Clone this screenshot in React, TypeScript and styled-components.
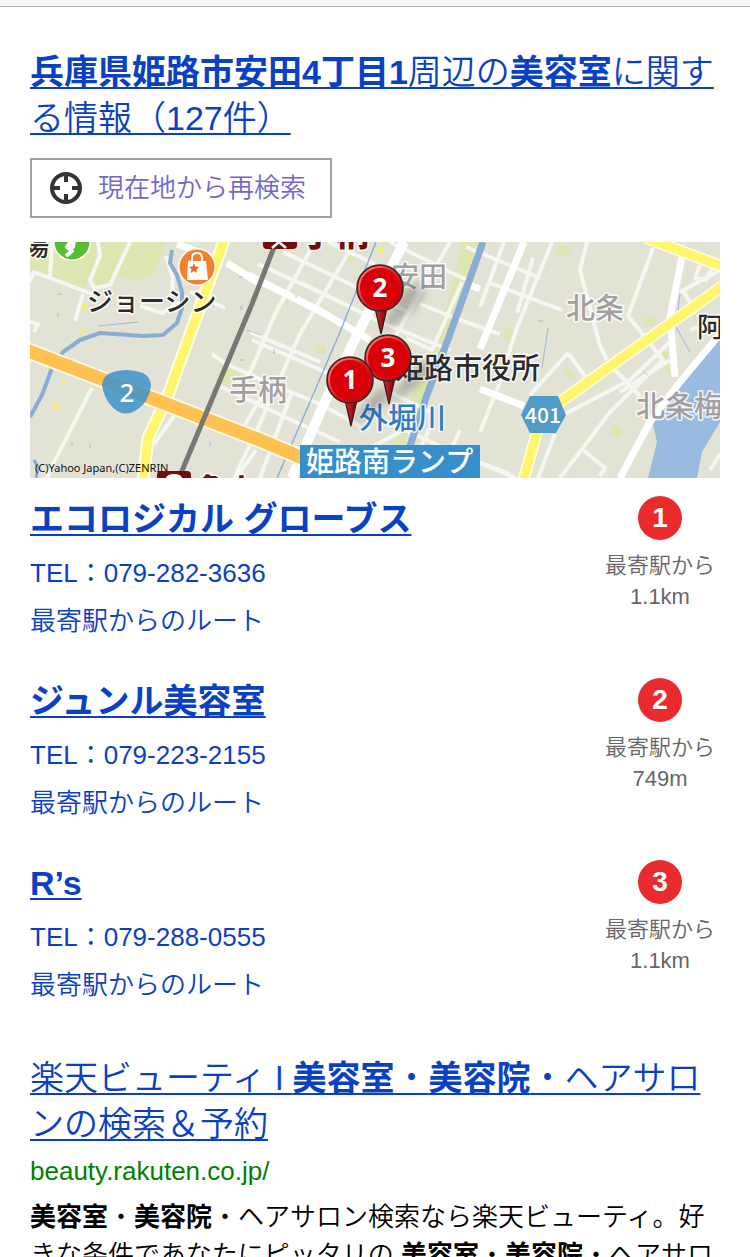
import React from "react";
import styled, { createGlobalStyle } from "styled-components";

const jp = `"Liberation Sans", "Noto Sans CJK JP", sans-serif`;

const GlobalStyle = createGlobalStyle`
  *, *::before, *::after { box-sizing: border-box; }
  body {
    margin: 0;
    background: #fff;
    color: #000;
    font-family: ${jp};
    font-weight: 350;
  }
`;

const BrowserEdge = styled.div`
  height: 7px;
  background: #f4f5f9;
  border-bottom: 1px solid #b2b2b2;
`;

const Page = styled.main`
  padding: 42px 30px 0;
`;

const Heading = styled.h2`
  margin: 0;
  font-size: 34px;
  line-height: 46px;
  font-weight: 350;
`;

const TitleLink = styled.a`
  color: #0a41c4;
  text-decoration: underline;
  text-decoration-thickness: 2px;
  text-underline-offset: 3px;

  b { font-weight: 700; }
`;

const LocateButton = styled.button`
  display: flex;
  align-items: center;
  gap: 16px;
  height: 60px;
  margin: 17px 0 24px;
  padding: 0 24px 0 18px;
  border: 2px solid #a0a0a0;
  border-radius: 0;
  background: #fff;
  color: #6f68cb;
  font-family: ${jp};
  font-weight: 350;
  font-size: 26px;
  line-height: 38px;
`;

const MapLink = styled.a`
  display: block;
  overflow: hidden;

  svg { display: block; width: 100%; height: auto; }
`;

const ShopList = styled.ul`
  margin: 0;
  padding: 0;
  list-style: none;
`;

const Shop = styled.li`
  display: flex;
  justify-content: space-between;
  align-items: flex-start;
  height: 182px;
  padding-top: 18px;
`;

const ShopName = styled.h3`
  margin: 0 0 7px;
  font-size: 34px;
  line-height: 46px;
  font-weight: 700;
`;

const ShopInfo = styled.div`
  flex: 1;
  min-width: 0;
`;

const ShopLink = styled.a`
  display: block;
  width: fit-content;
  color: #0a41c4;
  font-size: 26px;
  line-height: 48px;
  text-decoration: none;
`;

const Distance = styled.div`
  display: flex;
  flex-direction: column;
  align-items: center;
  width: 120px;
  color: #666;
  font-size: 22px;
  line-height: 31px;
`;

const Badge = styled.span`
  width: 44px;
  height: 44px;
  margin-bottom: 10px;
  border-radius: 50%;
  background: #e92b2d;
  color: #fff;
  font-size: 28px;
  line-height: 44px;
  font-weight: 700;
  text-align: center;
`;

const Result = styled.section`
  padding-top: 31px;
`;

const Url = styled.cite`
  display: block;
  margin: 5px 0 8px;
  color: #008000;
  font-size: 26px;
  line-height: 38px;
  font-style: normal;
`;

const Snippet = styled.p`
  margin: 0;
  font-size: 26px;
  line-height: 38px;

  b { font-weight: 700; }
`;

const MapText = styled.text<{ $size?: number; $tone?: string; $weight?: number; $halo?: number }>`
  font-family: "Noto Sans CJK JP", sans-serif;
  font-size: ${(p) => p.$size ?? 29}px;
  font-weight: ${(p) => p.$weight ?? 500};
  fill: ${(p) => p.$tone ?? "#2b2b2b"};
  stroke: #fff;
  stroke-opacity: 0.85;
  stroke-width: ${(p) => p.$halo ?? 3}px;
  stroke-linejoin: round;
  paint-order: stroke;
`;

const SignText = styled.text<{ $size: number; $weight?: number; $tone?: string }>`
  font-family: "Noto Sans", "Open Sans", sans-serif;
  font-size: ${(p) => p.$size}px;
  font-weight: ${(p) => p.$weight ?? 500};
  fill: ${(p) => p.$tone ?? "#fff"};
`;

const RouteNumber = styled.text`
  font-family: "Noto Sans CJK JP", sans-serif;
  font-size: 21px;
  font-weight: 500;
  fill: #fff;
`;

const Crosshair = () => (
  <svg width="32" height="32" viewBox="0 0 32 32" fill="none" stroke="#333" strokeWidth="4" aria-hidden="true">
    <circle cx="16" cy="16" r="14" />
    <path d="M16 2v8M16 22v8M2 16h8M22 16h8" />
  </svg>
);

const Pin = ({ x, y, n }: { x: number; y: number; n: number }) => (
  <g transform={`translate(${x} ${y})`}>
    <path d="M-5 20L1 46L7 20Z" fill="url(#pinPoint)" stroke="#2e2020" strokeWidth="1.2" />
    <circle r="23" fill="#d90007" stroke="#3a2626" strokeWidth="1.6" />
    <circle r="21" fill="none" stroke="url(#pinShine)" strokeWidth="2" />
    <SignText x="0" y="9" $size={26} $weight={700} textAnchor="middle">{n}</SignText>
  </g>
);

const AreaMap = () => (
  <svg viewBox="0 0 690 236" role="img" aria-label="周辺地図">
    <defs>
      <linearGradient id="pinShine" x1="0" y1="0" x2="1" y2="1">
        <stop offset="0" stopColor="#ff8d8d" />
        <stop offset=".55" stopColor="#dc1a1c" />
        <stop offset="1" stopColor="#a60008" />
      </linearGradient>
      <linearGradient id="pinPoint">
        <stop offset="0" stopColor="#e22828" />
        <stop offset="1" stopColor="#7a0008" />
      </linearGradient>
      <filter id="soft" x="-30%" y="-30%" width="160%" height="160%"><feGaussianBlur stdDeviation="4" /></filter>
    </defs>
    <rect width="690" height="236" fill="#e3e3d5" />

    <g fill="#dde6b0">
      <path d="M0 0H68L65 20L55 46L20 34L0 28Z" />
      <path d="M70 0H135L126 28Q110 46 92 34L70 46L60 40L70 14Z" />
      <path d="M196 122L216 130L200 146L190 140Z" />
      <path d="M432 0H456L440 45L420 96L400 145L385 175L372 205H362L380 158L402 105L418 60Z" />
      <path d="M372 205H362L350 236H366Z" />
      <path d="M530 2L542 8L536 15L526 10ZM613 76h13v8h-13zM584 182l10 6-5 8-8-5ZM632 110l6 0 2 22-8-8ZM536 123l10 10-2 5-10-8ZM476 84l10 4-5 12-8-4ZM286 104h10v8h-10zM318 10l8 4-4 8-6-4Z" />
    </g>
    <g fill="#f4ec7e"><path d="M52 61h6v6h-6zM50 88h5v4h-5zM23 162h6v6h-6zM31 137h4v4h-4zM347 5h6v6h-6z" /></g>

    <path d="M690 96L667 118L637 153L623 183L627 200L618 236H667L672 210L690 180Z" fill="#98bbdf" />

    <g fill="none" stroke="#f6f6f2" strokeLinejoin="round">
      <g strokeWidth="4">
        <path d="M22 0L20 34M68 0L70 14L60 38L64 46L80 43L100 0M-1 40L4 30L62 52M53 52L45 79M136 14L143 36L142 54M110 64L132 71L150 60M0 80L8 82L4 90" />
        <path d="M62 146L22 224L17 236M196 122L230 137L290 162L330 184M187 143L240 168L270 182L310 200M144 174L124 202M226 208L206 236M236 146L210 192" />
        <path d="M160 50L195 66M182 112L196 122" />
        <path d="M285 0L246 70L216 140M320 8L270 92L226 190L204 236M262 150L230 236M300 150L262 230" />
        <path d="M228 22L300 55L350 80L420 108M253 10L320 42L378 70M298 0L345 22M360 0L420 30L437 38M390 62L430 78L470 92M436 5L510 36M420 0L362 100M400 25L372 82" />
        <path d="M376 96L402 108L432 40M222 98L300 132M220 90L290 120M270 40L330 70M360 150L400 170M346 175L430 213L480 232M370 190L340 206M400 186L376 236M430 188L408 236" />
        <path d="M474 0L450 65M503 16L487 71M460 41L532 68M522 0L486 88L470 140L450 190M557 0L550 28L570 104L577 118M623 6L598 74L633 118L580 170L530 236" />
        <path d="M583 126L610 154M500 153L538 111L557 137M533 173L600 138L640 100M525 192L508 236M553 208L575 226L570 234M670 23L665 36L676 38L683 24M650 50L690 28M653 48L666 72M660 88L676 82" />
        <path d="M450 221L486 236M590 150L640 118M680 228L690 212" />
      </g>
      <g stroke="#fff" strokeWidth="7">
        <path d="M374 0L326 95L293 164L272 212L262 236" strokeWidth="10" />
        <path d="M218 33L290 69L340 98M147 2L166 9M197 21L230 42M494 0L450 107M450 147L494 164M437 42L450 47" />
        <path d="M653 10L640 75L645 135M690 92L650 140L620 180L590 236" />
      </g>
    </g>

    <g fill="none" stroke="#89aed6">
      <path d="M142 8L140 21L147 33L152 50L152 66L147 81L133 93L113 94L70 91L50 98L33 110L22 126L12 153L0 175" strokeWidth="4" strokeLinejoin="round" />
      <path d="M4 218L8 226L6 236" strokeWidth="3" />
      <path d="M346 0L310 90L280 160L247 236" strokeWidth="1.4" />
      <path d="M68 84L108 80M650 52L646 85L660 110M518 86L512 126" strokeWidth=".8" />
      <path d="M453 0L433 56L417 100L397 153L378 210L372 236" strokeWidth="7" />
    </g>
    <g stroke="#8a96ba" strokeWidth=".8" opacity=".7">
      <path d="M27 52h5M28 71v4M42 200v4M60 201v5M209 35h4M211 64v4M210 118h4M217 88l14 5M180 200v4M244 107v5M266 53v3M508 79h5M614 130l4 3" />
    </g>

    <g fill="none" strokeLinejoin="round">
      <path d="M195 -4L137 156L118 196L113 240" stroke="#fffde6" strokeWidth="13" />
      <path d="M616 -4L694 25M694 43L530 160L508 186L493 240" stroke="#fffde6" strokeWidth="12" />
      <path d="M195 -4L137 156L118 196L113 240" stroke="#fff66e" strokeWidth="9" />
      <path d="M616 -4L694 25M694 43L530 160L508 186L493 240" stroke="#fff66e" strokeWidth="9" />
      <path d="M-4 108L230 198L310 232" stroke="#fff6e4" strokeWidth="17" />
      <path d="M-4 108L230 198L310 232" stroke="#ffc152" strokeWidth="13" />
      <path d="M246 0L222 62L149 236" stroke="#777774" strokeWidth="5" />
    </g>

    <circle cx="42" cy="0" r="19" fill="#fff" />
    <circle cx="42" cy="0" r="17.5" fill="#55be32" />
    <g fill="none" stroke="#fff" strokeWidth="4" strokeLinejoin="round">
      <path d="M42 -2L37 5L42 9L36 14" />
      <path d="M44 -2L43 5L39 6" />
    </g>
    <circle cx="167" cy="25" r="19" fill="#fff" />
    <circle cx="167" cy="25" r="17.5" fill="#f4802d" />
    <path d="M158 19H176L178 38H157Z" fill="#fff" />
    <path d="M162 22V16Q162 11 167 11T172 16V22" fill="none" stroke="#fff" strokeWidth="2" />
    <path d="M164 21L165.500 24.500L169 25L166.500 27.500L167 31L164 29L160.500 31L161.500 27.500L159 25L162.500 24.500Z" fill="#f06a22" />

    <path d="M72 144Q72 135 80 131Q96 125 113 131Q121 135 121 144Q118 163 103 170Q96 173 89 170Q76 163 72 144Z" fill="#3e93c9" fillOpacity=".86" />
    <SignText x="97" y="160" $size={26} textAnchor="middle">2</SignText>
    <path d="M491 173L500 154H528L536 173L526 191H500Z" fill="#3e93c9" fillOpacity=".9" />
    <RouteNumber x="513" y="181" textAnchor="middle">401</RouteNumber>

    <MapText x="-8" y="14" $size={27}>場</MapText>
    <MapText x="57" y="69" $size={26}>ジョーシン</MapText>
    <MapText x="199" y="159" $tone="#a39f9f">手柄</MapText>
    <MapText x="361" y="45" $size={28} $tone="#a39f9f">安田</MapText>
    <MapText x="536" y="77" $tone="#a39f9f">北条</MapText>
    <MapText x="606" y="175" $tone="#a39f9f">北条梅</MapText>
    <MapText x="667" y="95" $size={27}>阿</MapText>
    <MapText x="365" y="137">姫路市役所</MapText>
    <MapText x="0" y="0" $tone="#2d7cc6" transform="translate(329 187)">外堀川</MapText>

    <path d="M233 0H267V3Q267 7 263 7H237Q233 7 233 3Z" fill="#730c0c" />
    <path d="M242 6L249 0L256 6" stroke="#fff" strokeWidth="2.500" fill="none" />
    <MapText x="271" y="4" $size={34} $weight={900} $tone="#730c0c">手柄</MapText>
    <path d="M127 236V233Q127 229 131 229H157Q161 229 161 233V236Z" fill="#730c0c" />
    <path d="M136 236Q137 232 144 232T152 236Z" fill="#fff" />
    <MapText x="168" y="258" $size={29} $weight={900} $tone="#730c0c">亀山</MapText>

    <rect x="270" y="203" width="180" height="33" fill="#368fcb" />
    <MapText x="276" y="230" $size={28} $tone="#fff" $halo={0}>姫路南ランプ</MapText>
    <SignText x="5" y="230" $size={11} $weight={400} $tone="#111">(C)Yahoo Japan,(C)ZENRIN</SignText>

    <g fill="#333" opacity=".3" filter="url(#soft)">
      <path d="M352 90Q362 62 375 48Q392 34 395 50Q390 68 352 90Z" />
      <path d="M360 161Q370 140 384 126Q398 112 402 124Q398 140 360 161ZM322 184Q334 160 348 148Q360 142 360 152Q354 168 322 184Z" />
    </g>
    <Pin x={350} y={46} n={2} />
    <Pin x={358} y={116} n={3} />
    <Pin x={320} y={138} n={1} />
  </svg>
);

const shops = [
  { name: "エコロジカル グローブス", tel: "079-282-3636", distance: "1.1km" },
  { name: "ジュンル美容室", tel: "079-223-2155", distance: "749m" },
  { name: "R’s", tel: "079-288-0555", distance: "1.1km" },
];

export default function App() {
  return (
    <>
      <GlobalStyle />
      <BrowserEdge />
      <Page>
        <Heading>
          <TitleLink href="#list"><b>兵庫県姫路市安田4丁目1</b>周辺の<b>美容室</b>に関する情報（127件）</TitleLink>
        </Heading>
        <LocateButton type="button">
          <Crosshair />
          現在地から再検索
        </LocateButton>
        <MapLink href="#map"><AreaMap /></MapLink>
        <ShopList>
          {shops.map((shop, i) => (
            <Shop key={shop.name}>
              <ShopInfo>
                <ShopName><TitleLink href={`#shop${i + 1}`}>{shop.name}</TitleLink></ShopName>
                <ShopLink href={`tel:${shop.tel}`}>TEL：{shop.tel}</ShopLink>
                <ShopLink href={`#route${i + 1}`}>最寄駅からのルート</ShopLink>
              </ShopInfo>
              <Distance>
                <Badge>{i + 1}</Badge>
                <span>最寄駅から</span>
                <span>{shop.distance}</span>
              </Distance>
            </Shop>
          ))}
        </ShopList>
        <Result>
          <Heading>
            <TitleLink href="#rakuten">楽天ビューティ l <b>美容室</b>・<b>美容院</b>・ヘアサロンの検索＆予約</TitleLink>
          </Heading>
          <Url>beauty.rakuten.co.jp/</Url>
          <Snippet>
            <b>美容室</b>・<b>美容院</b>・ヘアサロン検索なら楽天ビューティ。好きな条件であなたにピッタリの <b>美容室</b>・<b>美容院</b>・ヘアサロ
          </Snippet>
        </Result>
      </Page>
    </>
  );
}
